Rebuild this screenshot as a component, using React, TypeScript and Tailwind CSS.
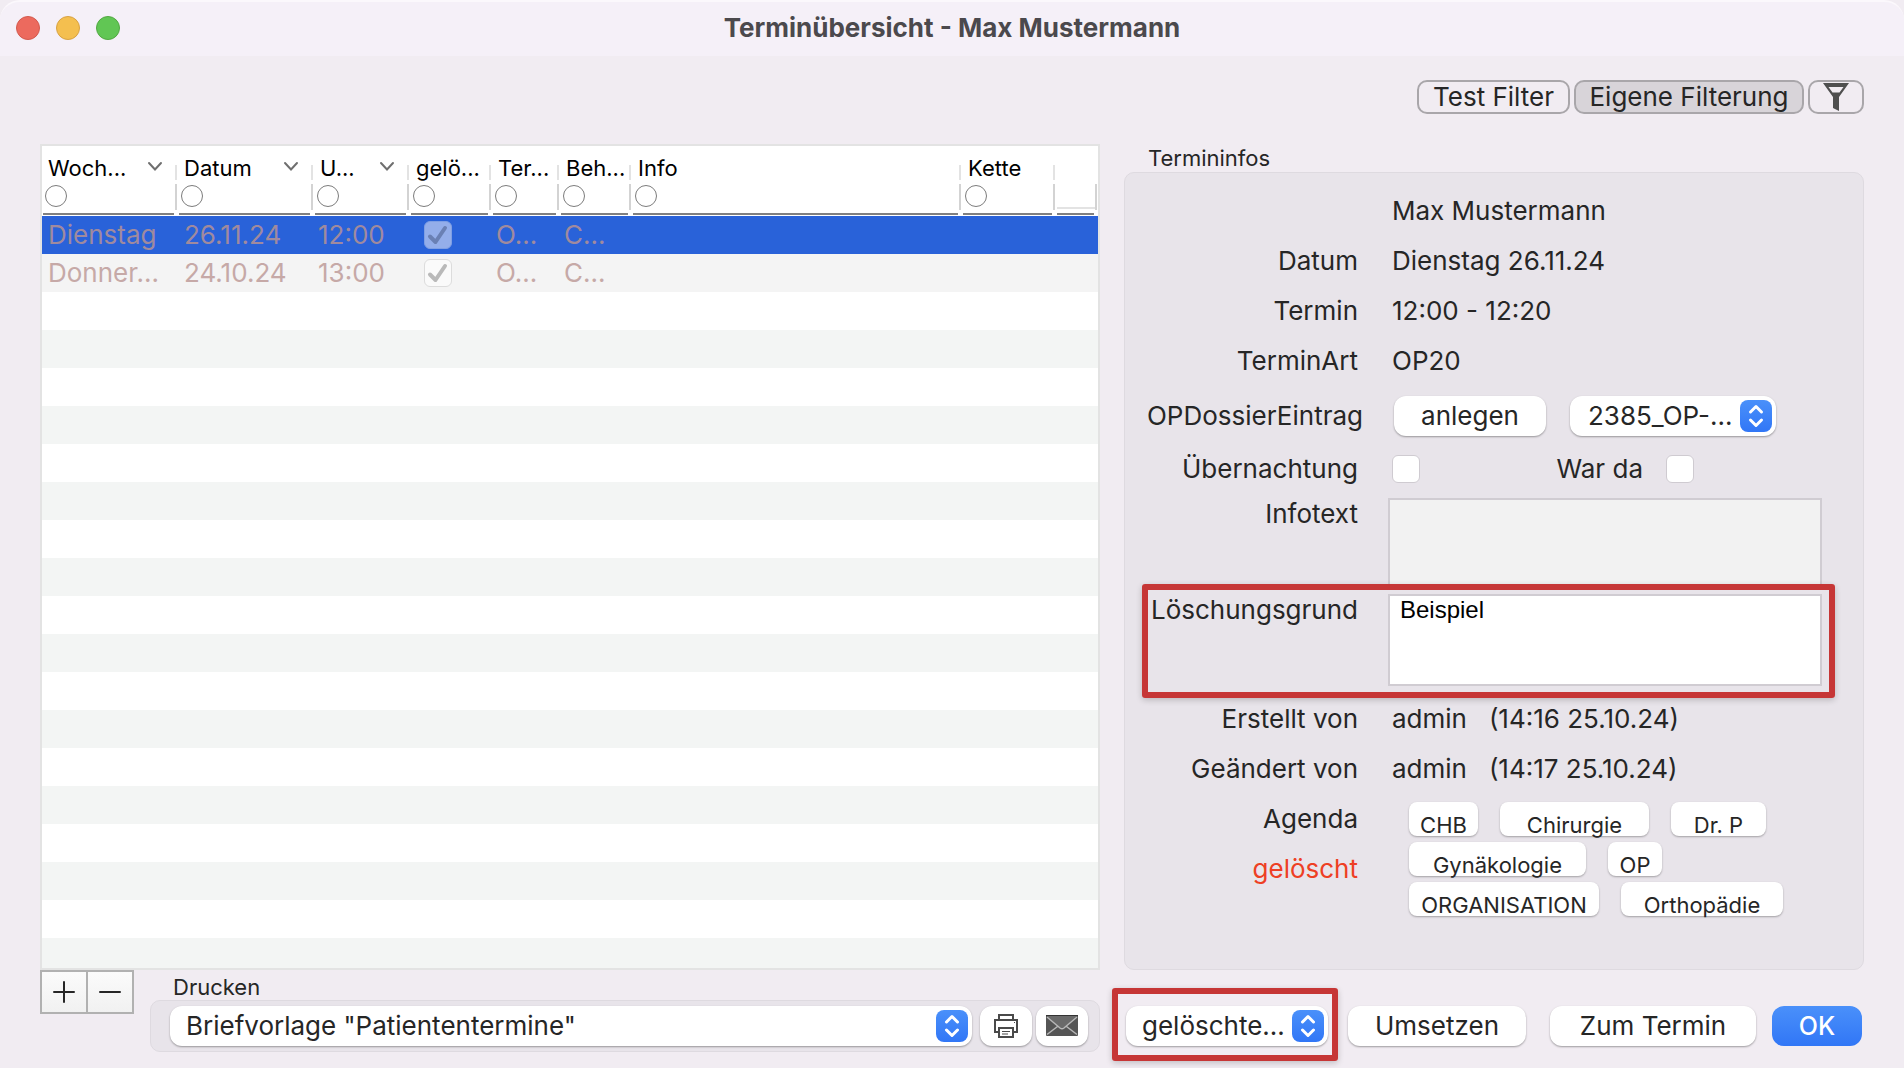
import React from 'react';

const columns = [
  { label: 'Woch...', width: 'w-[136px]', sortable: true },
  { label: 'Datum', width: 'w-[136px]', sortable: true },
  { label: 'U...', width: 'w-[96px]', sortable: true },
  { label: 'gelö...', width: 'w-[82px]' },
  { label: 'Ter...', width: 'w-[68px]' },
  { label: 'Beh...', width: 'w-[72px]' },
  { label: 'Info', width: '' },
  { label: 'Kette', width: 'w-[94px]' },
];

const termine = [
  { tag: 'Dienstag', datum: '26.11.24', zeit: '12:00', art: 'O...', behandler: 'C...', selected: true },
  { tag: 'Donner...', datum: '24.10.24', zeit: '13:00', art: 'O...', behandler: 'C...', selected: false },
];

const agendas = [
  { name: 'CHB', width: 'w-[69px]' },
  { name: 'Chirurgie', width: 'w-[149px]' },
  { name: 'Dr. P', width: 'w-[95px]' },
  { name: 'Gynäkologie', width: 'w-[177px]' },
  { name: 'OP', width: 'w-[54px]' },
  { name: 'ORGANISATION', width: 'w-[190px]' },
  { name: 'Orthopädie', width: 'w-[162px]' },
];

const Stepper: React.FC = () => (
  <span className="pointer-events-none absolute right-1 top-1 flex h-8 w-8 items-center justify-center rounded-lg bg-linear-to-b from-[#4a90fa] to-[#3176f6]">
    <svg width="32" height="32" viewBox="0 0 32 32" fill="none" stroke="white" strokeWidth="3" strokeLinecap="round" strokeLinejoin="round">
      <path d="M10.5 12 L16 6.5 L21.5 12 M10.5 20 L16 25.5 L21.5 20" />
    </svg>
  </span>
);

const Select: React.FC<{ label: string; value: string; className: string; pad?: string }> = ({ label, value, className, pad = 'pl-4' }) => (
  <div className={`relative h-10 ${className}`}>
    <select
      aria-label={label}
      className={`h-10 w-full appearance-none rounded-xl bg-white pr-9 text-[26px] leading-8 text-[#262626] shadow-[0_1px_2px_rgba(0,0,0,0.35)] ${pad}`}
    >
      <option>{value}</option>
    </select>
    <Stepper />
  </div>
);

const PushButton: React.FC<{ className: string; children: React.ReactNode; label?: string }> = ({ className, children, label }) => (
  <button
    aria-label={label}
    className={`flex h-10 items-center justify-center rounded-xl bg-white text-[26px] leading-8 shadow-[0_1px_2px_rgba(0,0,0,0.35)] ${className}`}
  >
    {children}
  </button>
);

const Highlight: React.FC<{ className: string }> = ({ className }) => (
  <div className={`pointer-events-none absolute rounded-[3px] border-6 border-[#c63636] shadow-[0_2px_6px_rgba(0,0,0,0.2)] ${className}`} />
);

const InfoRow: React.FC<{ label?: string; children: React.ReactNode }> = ({ label, children }) => (
  <div className="flex h-[50px] items-center gap-[34px]">
    <span className="w-[233px] text-right">{label}</span>
    <span className="whitespace-pre">{children}</span>
  </div>
);

const HeaderCell: React.FC<{ label: string; width: string; sortable?: boolean }> = ({ label, width, sortable }) => (
  <th className={`h-[70px] p-0 align-top font-normal ${width}`}>
    <div className="flex h-[34px] items-end justify-between">
      <span className="pl-1.5 text-[22px] leading-6">{label}</span>
      <span className="flex items-end gap-3">
        {sortable && (
          <svg width="16" height="34" viewBox="0 0 16 34" fill="none" stroke="#6f6f6f" strokeWidth="2" strokeLinecap="round">
            <path d="M2 17 L8 23.500 L14 17" />
          </svg>
        )}
        <span className="mr-px h-[15px] w-[2px] bg-[#e3e3e3]" />
      </span>
    </div>
    <div className="mt-1 flex h-[26px] items-start justify-between">
      <button aria-label={`${label} filtern`} className="ml-[3px] mt-px size-[22px] rounded-full border border-[#7c7c7c] bg-white" />
      <span className="mr-px h-[26px] w-[2px] bg-[#d3d3d3]" />
    </div>
    <div className="ml-px mr-1 mt-[3px] h-[2px] bg-[#808080]" />
  </th>
);

const TerminTable: React.FC = () => (
  <div className="flex min-h-0 flex-1 flex-col overflow-hidden border-2 border-[#e3e3e3] bg-white text-black">
    <table className="w-full table-fixed border-collapse text-left">
      <thead>
        <tr>
          {columns.map((column) => (
            <HeaderCell key={column.label} {...column} />
          ))}
          <th className="h-[70px] w-[42px] p-0 align-top">
            <div className="ml-px mt-[38px] flex h-[26px] items-end">
              <span className="mb-px h-[2px] flex-1 bg-[#e3e3e3]" />
              <span className="mr-px h-[26px] w-[2px] bg-[#d3d3d3]" />
            </div>
            <div className="ml-px mr-1 mt-[3px] h-[2px] bg-[#808080]" />
          </th>
        </tr>
      </thead>
      <tbody>
        {termine.map((termin) => (
          <tr
            key={termin.datum}
            className={`h-[38px] text-[26px] leading-[38px] ${
              termin.selected ? 'bg-[#2962d9] text-[#a08a9e]' : 'bg-[#f4f4f4] text-[#c6a9a7]'
            }`}
          >
            <td className="p-0 pl-1.5">{termin.tag}</td>
            <td className="p-0 pl-1.5">{termin.datum}</td>
            <td className="p-0 pl-1">{termin.zeit}</td>
            <td className="p-0 pl-[14px]">
              <span className="relative block size-7">
                <input
                  type="checkbox"
                  aria-label="gelöscht"
                  defaultChecked
                  disabled
                  className={`block size-7 appearance-none rounded-md border ${
                    termin.selected ? 'border-[#7f9fe4] bg-[#94aeea]' : 'border-[#dcdcdc] bg-[#fafafa]'
                  }`}
                />
                <svg
                  className="pointer-events-none absolute inset-0"
                  viewBox="0 0 28 28"
                  fill="none"
                  stroke={termin.selected ? '#6a80b4' : '#b9b9b9'}
                  strokeWidth="4"
                  strokeLinecap="round"
                  strokeLinejoin="round"
                >
                  <path d="M6 15.500 L11.500 21 L21 7" />
                </svg>
              </span>
            </td>
            <td className="p-0 pl-1">{termin.art}</td>
            <td className="p-0 pl-1">{termin.behandler}</td>
            <td className="p-0" />
            <td className="p-0" />
            <td className="p-0" />
          </tr>
        ))}
      </tbody>
    </table>
    <div className="flex-1 bg-[repeating-linear-gradient(to_bottom,#ffffff_0px,#ffffff_38px,#f3f5f4_38px,#f3f5f4_76px)]" />
  </div>
);

const TerminInfos: React.FC = () => (
  <section className="flex w-[740px] flex-col">
    <h2 className="h-7 pl-6 text-[22px] leading-7">Termininfos</h2>
    <div className="relative flex-1 rounded-[10px] border border-[#dedae0] bg-[#e8e4ea] pt-[13px] text-[26px] leading-8">
      <InfoRow>Max Mustermann</InfoRow>
      <InfoRow label="Datum">Dienstag 26.11.24</InfoRow>
      <InfoRow label="Termin">12:00 - 12:20</InfoRow>
      <InfoRow label="TerminArt">OP20</InfoRow>
      <div className="flex h-[60px] items-center">
        <span className="w-[238px] text-right">OPDossierEintrag</span>
        <PushButton className="ml-[31px] w-[152px]">anlegen</PushButton>
        <Select label="OP-Dossier" value="2385_OP-..." className="ml-6 w-[206px]" pad="pl-[18px]" />
      </div>
      <div className="flex h-[46px] items-center">
        <label htmlFor="uebernachtung" className="w-[233px] text-right">Übernachtung</label>
        <input id="uebernachtung" type="checkbox" className="ml-[34px] size-7 appearance-none rounded-md border border-[#cfcbd1] bg-white" />
        <label htmlFor="warda" className="ml-[135px] w-[88px] text-right">War da</label>
        <input id="warda" type="checkbox" className="ml-[23px] size-7 appearance-none rounded-md border border-[#cfcbd1] bg-white" />
      </div>
      <div className="mt-1.5 flex gap-[30px]">
        <label htmlFor="infotext" className="w-[233px] text-right">Infotext</label>
        <textarea id="infotext" readOnly className="h-[92px] w-[434px] resize-none border-2 border-[#d0ccd2] bg-[#f2f2f2]" />
      </div>
      <div className="relative mt-1 flex gap-[30px]">
        <label htmlFor="grund" className="w-[233px] text-right">Löschungsgrund</label>
        <textarea
          id="grund"
          defaultValue="Beispiel"
          className="h-[92px] w-[434px] resize-none border-2 border-[#d0ccd2] bg-white px-2.5 font-['Liberation_Sans',sans-serif] text-2xl leading-7 text-black"
        />
        <Highlight className="-bottom-3 -top-2.5 left-[17px] right-7" />
      </div>
      <div className="h-2" />
      <InfoRow label="Erstellt von">admin   (14:16 25.10.24)</InfoRow>
      <InfoRow label="Geändert von">admin   (14:17 25.10.24)</InfoRow>
      <div className="flex gap-[51px]">
        <div className="w-[233px] text-right leading-[50px]">
          <div>Agenda</div>
          <div className="text-[#ee3f24]">gelöscht</div>
        </div>
        <div className="flex w-[400px] flex-wrap gap-x-[22px] gap-y-1.5 pt-2">
          {agendas.map((agenda) => (
            <button
              key={agenda.name}
              className={`flex h-[34px] items-end justify-center rounded-lg bg-white text-[22px] leading-[22px] shadow-[0_1px_2px_rgba(0,0,0,0.3)] ${agenda.width}`}
            >
              {agenda.name}
            </button>
          ))}
        </div>
      </div>
    </div>
  </section>
);

const PrinterIcon: React.FC = () => (
  <svg width="26" height="26" viewBox="0 0 26 26" fill="none" stroke="#4a4a4a" strokeWidth="2">
    <path d="M6 7 V2 H20 V7 M6 19 H2 V7 H24 V19 H20" />
    <path d="M6 15 H20 V24 H6 Z" />
    <path d="M9 18.500 H17 M9 21 H15" strokeWidth="1" />
    <path d="M21 9.500 H22" strokeWidth="1" />
  </svg>
);

const MailIcon: React.FC = () => (
  <svg width="32" height="22" viewBox="0 0 32 22" fill="none">
    <rect width="32" height="21" rx="1" fill="#555555" />
    <path d="M1 1 H31 L18 13 Q16 14.500 14 13 Z" fill="#6a6a6a" />
    <path d="M1 2 L14 13 Q16 14.500 18 13 L31 2 M1 19.500 L11.500 11.500 M31 19.500 L20.500 11.500" stroke="#b8b8b8" strokeWidth="1.500" />
    <path d="M0 .5 H32" stroke="#333333" />
  </svg>
);

const Footer: React.FC = () => (
  <footer className="flex h-[98px] gap-6 px-10">
    <div className="flex min-w-0 flex-1 items-start gap-4">
      <div className="flex h-11 w-[94px] divide-x-2 divide-[#b1b1b1] border-2 border-[#b1b1b1] bg-linear-to-b from-[#fbfbfb] to-[#f1f1f1]">
        {['M12 2 V22 M2 12 H22', 'M2 12 H22'].map((path, index) => (
          <button key={path} aria-label={index === 0 ? 'Hinzufügen' : 'Entfernen'} className="flex flex-1 items-center justify-center">
            <svg width="24" height="24" viewBox="0 0 24 24" stroke="#262626" strokeWidth="2" strokeLinecap="round">
              <path d={path} />
            </svg>
          </button>
        ))}
      </div>
      <div className="min-w-0 flex-1">
        <h2 className="h-[30px] pl-[23px] text-[22px] leading-[34px]">Drucken</h2>
        <div className="flex h-[52px] items-center gap-1 rounded-[10px] border border-[#dedae0] bg-[#e8e4ea] pl-[19px] pr-[11px]">
          <Select label="Briefvorlage" value={'Briefvorlage "Patiententermine"'} className="mr-1 flex-1" />
          <PushButton className="w-[52px]" label="Drucken"><PrinterIcon /></PushButton>
          <PushButton className="w-[52px]" label="E-Mail"><MailIcon /></PushButton>
        </div>
      </div>
    </div>
    <div className="flex w-[740px] items-start pl-0.5 pt-9">
      <div className="relative mr-5">
        <Select label="Anzeige" value="gelöschte..." className="w-[202px]" />
        <Highlight className="-bottom-[15px] -left-3.5 -right-2.5 -top-[18px]" />
      </div>
      <PushButton className="mr-6 w-[178px]">Umsetzen</PushButton>
      <PushButton className="mr-4 w-[206px]">Zum Termin</PushButton>
      <button className="h-10 w-[90px] rounded-xl bg-linear-to-b from-[#4a90fa] to-[#3176f6] text-[25px] leading-8 font-medium text-white">OK</button>
    </div>
  </footer>
);

export default function App() {
  return (
    <div className="flex h-screen min-h-[1000px] min-w-[1600px] flex-col bg-[#f1ecf2] font-['Inter',sans-serif] text-[#262626]">
      <header className="flex h-14 items-center rounded-t-[20px] border-t-2 border-[#fbf8fc] bg-[#f5f0f8] px-4 pb-0.5">
        <div className="flex flex-1 gap-4">
          <button aria-label="Schließen" className="size-6 rounded-full border border-[#d35a4e] bg-[#ec6a5e]" />
          <button aria-label="Minimieren" className="size-6 rounded-full border border-[#d8a243] bg-[#f4bf4f]" />
          <button aria-label="Maximieren" className="size-6 rounded-full border border-[#52a842] bg-[#61c654]" />
        </div>
        <h1 className="text-[26px] leading-8 font-bold text-[#4b494d]">Terminübersicht - Max Mustermann</h1>
        <div className="flex-1" />
      </header>
      <div className="flex justify-end gap-1 px-10 pt-6 text-[26px] leading-[28px]">
        <button className="h-[34px] w-[153px] rounded-[10px] border-2 border-[#a9a6aa]">Test Filter</button>
        <button className="h-[34px] w-[230px] rounded-[10px] border-2 border-[#a9a6aa] bg-[#d8d4d9]">Eigene Filterung</button>
        <button aria-label="Filter" className="flex h-[34px] w-14 items-center justify-center rounded-[10px] border-2 border-[#a9a6aa]">
          <svg width="26" height="28" viewBox="0 0 26 28" fill="#4f4f4f">
            <path fillRule="evenodd" d="M0 0 H26 L16 14 V28 L10 25 V14 Z M5.500 4 L9.500 9.500 H16.500 L20.500 4 Z" />
          </svg>
        </button>
      </div>
      <main className="mt-[30px] flex min-h-0 flex-1 gap-6 px-10">
        <TerminTable />
        <TerminInfos />
      </main>
      <Footer />
    </div>
  );
}
